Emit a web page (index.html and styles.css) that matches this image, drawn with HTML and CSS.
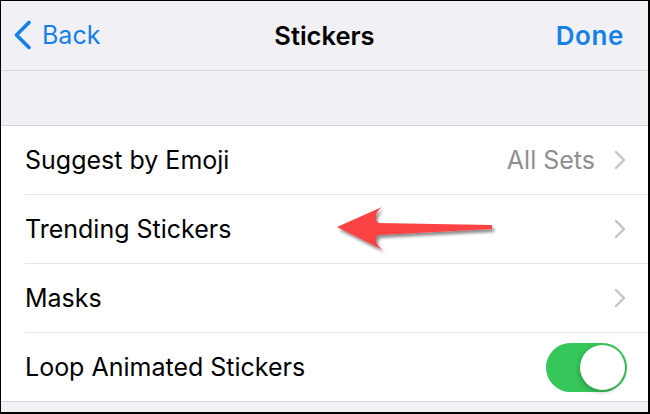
FILE: index.html
```html
<!DOCTYPE html>
<html lang="en">
<head>
  <meta charset="UTF-8" />
  <meta name="viewport" content="width=device-width, initial-scale=1.0"/>
  <title>Stickers</title>
  <link rel="stylesheet" href="styles.css">
</head>
<body>

<div class="screen">
  <header class="navbar">
    <a class="nav-back" href="#">
      <svg width="19" height="30" viewBox="0 0 19 30"><path d="M16 2.5 L3.5 15 L16 27.5" fill="none" stroke="currentColor" stroke-width="3.6" stroke-linecap="round" stroke-linejoin="round"/></svg>
      <span>Back</span>
    </a>
    <div class="nav-title">Stickers</div>
    <a class="nav-done" href="#">Done</a>
  </header>

  <div class="gap"></div>

  <ul class="list">
    <li class="row">
      <span class="label">Suggest by Emoji</span>
      <span class="detail">All Sets</span>
      <svg class="chevron" width="12" height="20" viewBox="0 0 12 20"><path d="M2 2 L10 10 L2 18" fill="none" stroke="currentColor" stroke-width="2.4" stroke-linecap="round" stroke-linejoin="round"/></svg>
    </li>
    <li class="row">
      <span class="label">Trending Stickers</span>
      <svg class="chevron" width="12" height="20" viewBox="0 0 12 20"><path d="M2 2 L10 10 L2 18" fill="none" stroke="currentColor" stroke-width="2.4" stroke-linecap="round" stroke-linejoin="round"/></svg>
    </li>
    <li class="row">
      <span class="label">Masks</span>
      <svg class="chevron" width="12" height="20" viewBox="0 0 12 20"><path d="M2 2 L10 10 L2 18" fill="none" stroke="currentColor" stroke-width="2.4" stroke-linecap="round" stroke-linejoin="round"/></svg>
    </li>
    <li class="row">
      <span class="label">Loop Animated Stickers</span>
      <span class="toggle on"><span class="knob"></span></span>
    </li>
  </ul>

  <div class="gap bottom"></div>

  <!-- annotation arrow -->
  <svg class="pointer" width="650" height="414" viewBox="0 0 650 414">
    <defs>
      <filter id="shadow" x="-10%" y="-20%" width="130%" height="160%">
        <feDropShadow dx="2" dy="3" stdDeviation="1.6" flood-color="#000" flood-opacity="0.45"/>
      </filter>
    </defs>
    <path d="M337 227 L382 207 Q372 215 378 223 L492 225 L492 229 L378 235 Q372 242 383 250 Z" fill="#fc4343" filter="url(#shadow)"/>
  </svg>
</div>

</body>
</html>
```

FILE: styles.css
```css
* {
  box-sizing: border-box;
}

body {
  margin: 0;
  font-family: Inter, 'Noto Sans', sans-serif;
  background: #000;
}

.screen {
  position: relative;
  width: 650px;
  height: 414px;
  overflow: hidden;
  background: #f0f0f5;
  border-style: solid;
  border-color: #000;
  border-width: 1px 2px 2px 1px;
}

.navbar {
  height: 70px;
  display: flex;
  align-items: center;
  justify-content: space-between;
  padding: 0 24px 1px 12px;
  border-bottom: 1px solid #d6d6da;
  position: relative;
}

.navbar a {
  text-decoration: none;
  color: #1581e8;
}

.nav-back {
  display: flex;
  align-items: center;
  gap: 10px;
  font-size: 25px;
}

.nav-title {
  position: absolute;
  left: 0;
  right: 0;
  text-align: center;
  font-size: 25.5px;
  font-weight: 600;
  color: #000;
  pointer-events: none;
}

.nav-done {
  font-size: 26px;
  font-weight: 600;
  letter-spacing: 0.6px;
}

.gap {
  height: 55px;
  border-bottom: 1px solid #d6d6da;
}

.gap.bottom {
  border-bottom: none;
  height: 12px;
}

.list {
  list-style: none;
  margin: 0;
  padding: 0 0 0 24px;
  background: #fff;
  border-bottom: 1px solid #d6d6da;
}

.row {
  height: 69px;
  display: flex;
  align-items: center;
  padding-right: 22px;
  border-bottom: 1px solid #e4e4e7;
  font-size: 25px;
  color: #000;
}

.row:last-child {
  border-bottom: none;
  height: 68px;
}

.label {
  flex: 1;
}

.detail {
  color: #8e8e93;
  margin-right: 19px;
}

.chevron {
  color: #c4c4c8;
}

.toggle {
  width: 81px;
  height: 49px;
  border-radius: 25px;
  background: #35c759;
  display: flex;
  align-items: center;
  justify-content: flex-end;
  padding: 2px;
  margin-right: -1px;
}

.knob {
  width: 45px;
  height: 45px;
  border-radius: 50%;
  background: #fff;
  box-shadow: -1px 2px 5px rgba(0, 0, 0, 0.25);
}

.pointer {
  position: absolute;
  left: -1px;
  top: -1px;
  pointer-events: none;
}
```
